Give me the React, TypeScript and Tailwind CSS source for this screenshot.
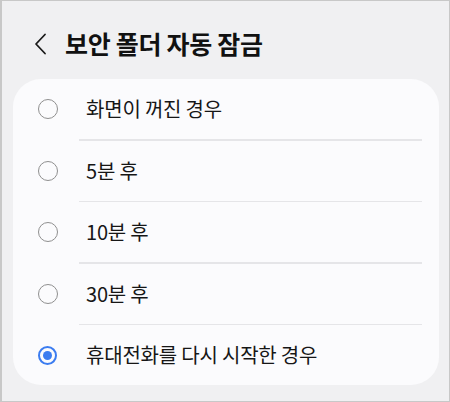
import { useState } from 'react';

const options = ['화면이 꺼진 경우', '5분 후', '10분 후', '30분 후', '휴대전화를 다시 시작한 경우'];

function Radio({ checked }: { checked: boolean }) {
  if (checked) {
    return (
      <span className="w-[19px] h-[19px] rounded-full border-[2px] border-[#3b7cf0] flex items-center justify-center shrink-0">
        <span className="w-[9px] h-[9px] rounded-full bg-[#3b7cf0]" />
      </span>
    );
  }
  return <span className="w-[20px] h-[20px] rounded-full border-[1.5px] border-[#8f8f8f] shrink-0" />;
}

export default function App() {
  const [selected, setSelected] = useState(4);

  return (
    <div
      className="w-[450px] h-[402px] bg-[#f0f0f2] border border-l-2 border-[#c8c8c8] overflow-hidden"
      style={{ fontFamily: '"Noto Sans CJK KR", "Noto Sans", sans-serif' }}
    >
      {/* Header */}
      <div className="h-[78px] flex items-center pl-[29px] pt-[7px]">
        <svg width="20" height="24" viewBox="0 0 20 24" fill="none">
          <path d="M14 2.5 L5 12 L14 21.5" stroke="#1a1a1a" strokeWidth="1.8" strokeLinecap="round" strokeLinejoin="round" />
        </svg>
        <h1 className="ml-[14px] text-[25px] font-bold text-[#111] tracking-[-0.3px]">보안 폴더 자동 잠금</h1>
      </div>

      {/* Options card */}
      <div className="ml-[11px] mr-[10px] bg-[#fbfbfd] rounded-[28px]">
        {options.map((label, i) => (
          <div key={i}>
            {i > 0 && <div className="ml-[66px] mr-[17px] h-[1.5px] bg-[#e5e5e8]" />}
            <button
              onClick={() => setSelected(i)}
              className="w-full h-[60px] flex items-center pl-[25px] text-left"
            >
              <Radio checked={selected === i} />
              <span className={(selected === i ? 'ml-[29px]' : 'ml-[28px]') + ' text-[20px] text-[#161616] tracking-[-0.2px]'}>{label}</span>
            </button>
          </div>
        ))}
      </div>
    </div>
  );
}
